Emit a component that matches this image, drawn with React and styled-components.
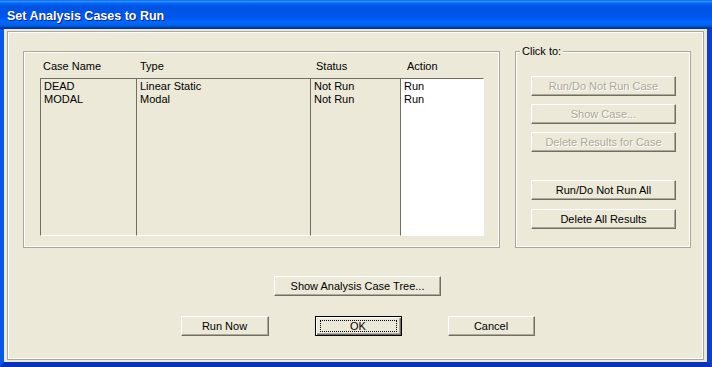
import React from 'react'
import styled, { createGlobalStyle, css } from 'styled-components'

const FACE = '#ece9d8'
const SHADOW = '#aca899'
const DARK = '#716f64'

const columns = [
  { key: 'name', title: 'Case Name', width: 96, head: 3 },
  { key: 'type', title: 'Type', width: 174, head: 4 },
  { key: 'status', title: 'Status', width: 90, head: 6 },
  { key: 'action', title: 'Action', width: 84, head: 7, white: true },
]

const cases = [
  { name: 'DEAD', type: 'Linear Static', status: 'Not Run', action: 'Run' },
  { name: 'MODAL', type: 'Modal', status: 'Not Run', action: 'Run' },
]

const GlobalStyle = createGlobalStyle`
  html, body {
    margin: 0;
    padding: 0;
    background: ${FACE};
  }
  body {
    font-family: 'Liberation Sans', Arial, sans-serif;
    font-size: 11px;
    color: #000;
  }
`

const Window = styled.div`
  width: 712px;
  height: 367px;
  display: flex;
  flex-direction: column;
  overflow: hidden;
`

const TitleBar = styled.div`
  flex: none;
  height: 29px;
  box-sizing: border-box;
  display: flex;
  align-items: center;
  padding: 3px 0 0 7px;
  color: #fff;
  font-family: 'Liberation Sans', Arial, sans-serif;
  font-weight: bold;
  font-size: 12.5px;
  text-shadow: 1px 1px 0 #0a1e8c;
  background: linear-gradient(
    to bottom,
    #0058ee 0%,
    #3593ff 4%,
    #288eff 6%,
    #127dff 8%,
    #036ffc 10%,
    #0262ee 14%,
    #0057e5 20%,
    #0054e3 24%,
    #0055eb 56%,
    #005bf5 66%,
    #026afe 76%,
    #0062ef 86%,
    #0052d6 92%,
    #0040ab 94%,
    #003092 100%
  );
`

const Client = styled.div`
  flex: 1;
  display: flex;
  background: ${FACE};
  border-style: solid;
  border-width: 0 5px 5px 4px;
  border-color: #0a3dd0 #0a3dd0 #0a32b8 #0757e9;
  padding: 2px 3px 2px 3px;
`

const Frame = styled.div`
  flex: 1;
  display: flex;
  flex-direction: column;
  border: 1px solid ${SHADOW};
  box-shadow: inset 0 0 0 1px #fff;
  padding: 19px 11px 0 15px;
`

const TopRow = styled.div`
  display: flex;
  gap: 15px;
  height: 197px;
`

const GroupBox = styled.div`
  position: relative;
  box-sizing: border-box;
  width: ${(p) => p.$width}px;
  border: 1px solid ${SHADOW};
  box-shadow: inset 0 0 0 1px #fff;
  display: flex;
  flex-direction: column;
`

const Legend = styled.span`
  position: absolute;
  top: -7px;
  left: 4px;
  padding: 0 2px;
  background: ${FACE};
  line-height: 13px;
`

const CasesBody = styled.div`
  padding: 8px 15px 11px 16px;
  display: grid;
  grid-template-columns: ${columns.map((c) => c.width + 'px').join(' ')};
  grid-template-rows: 13px 1fr;
  row-gap: 5px;
  flex: 1;
`

const Heading = styled.div`
  line-height: 13px;
  padding-left: ${(p) => p.$pad}px;
  white-space: nowrap;
`

const Column = styled.div`
  border-top: 1px solid ${DARK};
  border-left: 1px solid ${DARK};
  border-bottom: 1px solid #fff;
  border-right: ${(p) => (p.$white ? '1px solid #fff' : '0')};
  background: ${(p) => (p.$white ? '#fff' : 'transparent')};
  padding: 1px 0 0 3px;
`

const Cell = styled.div`
  line-height: 13px;
  white-space: nowrap;
`

const ButtonStack = styled.div`
  display: flex;
  flex-direction: column;
  padding: 24px 0 0 15px;
`

const Spacer = styled.div`
  height: ${(p) => p.$h}px;
  flex: none;
`

const Button = styled.button`
  box-sizing: border-box;
  width: ${(p) => p.$w}px;
  height: 20px;
  margin: 0;
  padding: 0;
  display: flex;
  align-items: center;
  justify-content: center;
  font-family: 'Liberation Sans', Arial, sans-serif;
  font-size: 11px;
  color: #000;
  background: ${FACE};
  border: 1px solid;
  border-color: #fff ${DARK} ${DARK} #fff;
  box-shadow: inset -1px -1px 0 ${SHADOW};
  white-space: nowrap;
  ${(p) =>
    p.disabled &&
    css`
      color: ${SHADOW};
      text-shadow: 1px 1px 0 #fff;
    `}
  ${(p) =>
    p.$default &&
    css`
      border: 1px solid #000;
      box-shadow: inset 1px 1px 0 #fff, inset -1px -1px 0 ${DARK}, inset -2px -2px 0 ${SHADOW};
      padding: 3px 4px;
    `}
`

const FocusRect = styled.span`
  flex: 1;
  align-self: stretch;
  display: flex;
  align-items: center;
  justify-content: center;
  border: 1px dotted #000;
`

const CenterRow = styled.div`
  display: flex;
  justify-content: center;
  gap: 46px;
  margin-top: ${(p) => p.$top}px;
`

export default function App() {
  return (
    <>
      <GlobalStyle />
      <Window>
        <TitleBar>Set Analysis Cases to Run</TitleBar>
        <Client>
          <Frame>
            <TopRow>
              <GroupBox $width={477}>
                <CasesBody>
                  {columns.map((c) => (
                    <Heading key={c.key} $pad={c.head}>
                      {c.title}
                    </Heading>
                  ))}
                  {columns.map((c) => (
                    <Column key={c.key} $white={c.white}>
                      {cases.map((row) => (
                        <Cell key={row.name}>{row[c.key]}</Cell>
                      ))}
                    </Column>
                  ))}
                </CasesBody>
              </GroupBox>
              <GroupBox $width={176}>
                <Legend>Click to:</Legend>
                <ButtonStack>
                  <Button $w={145} disabled>Run/Do Not Run Case</Button>
                  <Spacer $h={8} />
                  <Button $w={145} disabled>Show Case...</Button>
                  <Spacer $h={8} />
                  <Button $w={145} disabled>Delete Results for Case</Button>
                  <Spacer $h={28} />
                  <Button $w={145}>Run/Do Not Run All</Button>
                  <Spacer $h={9} />
                  <Button $w={145}>Delete All Results</Button>
                </ButtonStack>
              </GroupBox>
            </TopRow>
            <CenterRow $top={28}>
              <Button $w={167}>Show Analysis Case Tree...</Button>
            </CenterRow>
            <CenterRow $top={20}>
              <Button $w={88}>Run Now</Button>
              <Button $w={87} $default>
                <FocusRect>OK</FocusRect>
              </Button>
              <Button $w={87}>Cancel</Button>
            </CenterRow>
          </Frame>
        </Client>
      </Window>
    </>
  )
}
